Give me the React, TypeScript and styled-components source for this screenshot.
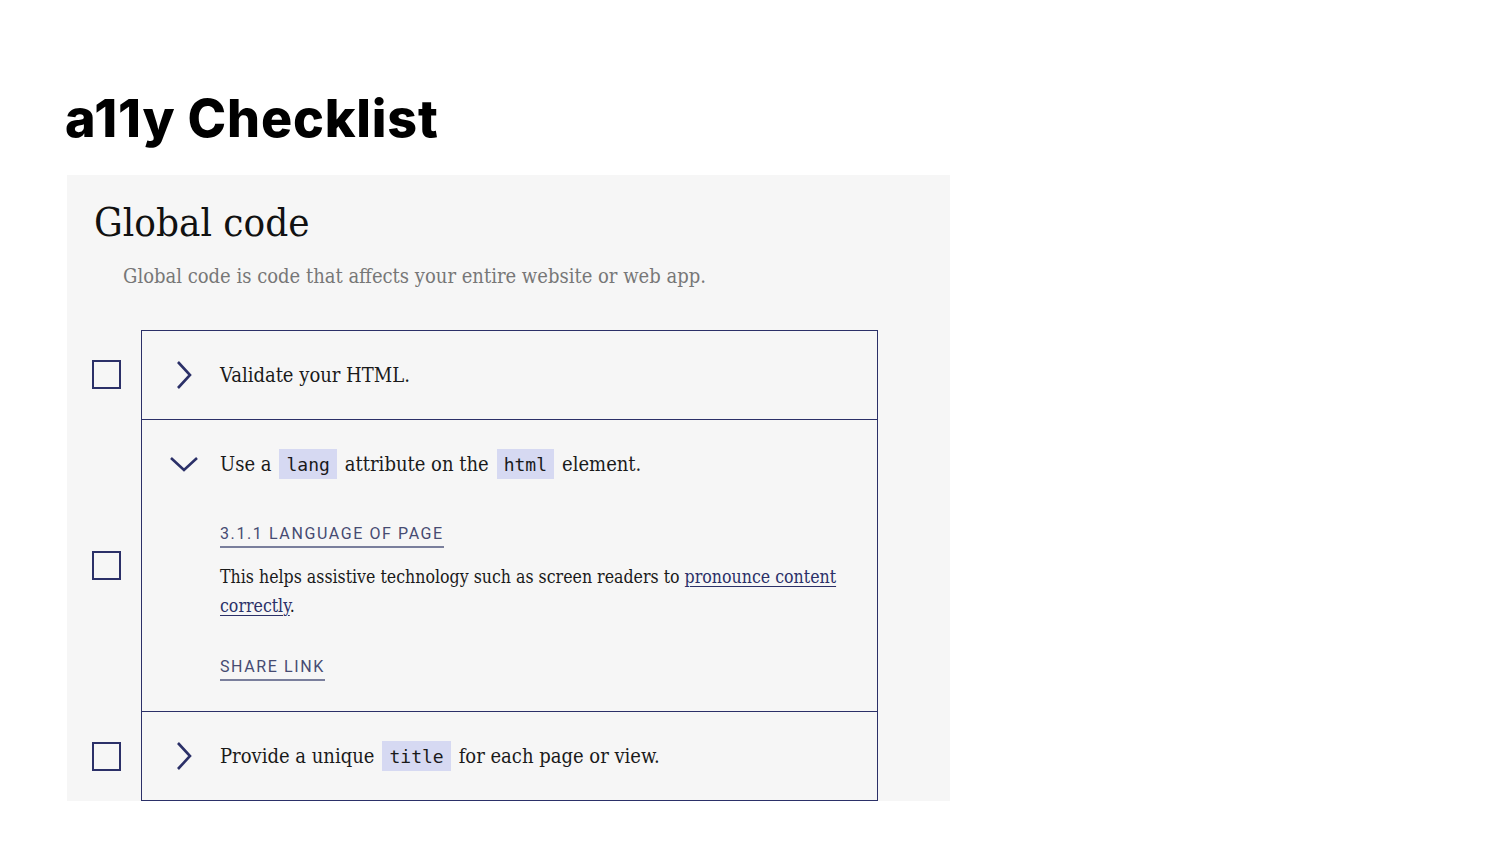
import React from "react";
import styled, { createGlobalStyle } from "styled-components";

const SERIF = `"DejaVu Serif Condensed", "Liberation Serif", serif`;

const Global = createGlobalStyle`
  html, body { margin: 0; padding: 0; background: #ffffff; }
  body { font-family: ${SERIF}; }
`;

const NAVY = "#2b3068";

const Page = styled.div`
  padding: 84px 0 40px 65px;
`;

const Title = styled.h1`
  margin: 0 0 21px 0;
  font-family: "Inter", "Noto Sans", sans-serif;
  font-weight: 800;
  font-size: 52px;
  line-height: 70px;
  letter-spacing: 0.8px;
  color: #000;
`;

const Panel = styled.section`
  margin-left: 2px;
  width: 883px;
  background: #f6f6f6;
  padding: 20px 0 0 0;
  box-sizing: border-box;
`;

const PanelTitle = styled.h2`
  margin: 0 0 0 27px;
  font-family: ${SERIF};
  font-weight: 400;
  font-size: 40px;
  line-height: 54px;
  color: #111;
`;

const Lead = styled.p`
  margin: 13px 0 0 56px;
  font-family: ${SERIF};
  font-size: 20px;
  line-height: 28px;
  color: #777;
`;

const List = styled.ul`
  list-style: none;
  margin: 40px 0 0 0;
  padding: 0;
`;

const Item = styled.li`
  display: grid;
  grid-template-columns: 74px 737px;
  align-items: center;
`;

const CheckCell = styled.div`
  display: flex;
  justify-content: flex-start;
  padding-left: 25px;
`;

const Check = styled.span`
  display: block;
  width: 25px;
  height: 25px;
  border: 2px solid ${NAVY};
`;

const Box = styled.div<{ $last?: boolean }>`
  align-self: stretch;
  border-left: 1px solid ${NAVY};
  border-right: 1px solid ${NAVY};
  border-top: 1px solid ${NAVY};
  border-bottom: ${(p) => (p.$last ? `1px solid ${NAVY}` : "0")};
`;

const Summary = styled.div`
  display: flex;
  align-items: center;
  height: 88px;
  padding-left: 27px;
  font-family: ${SERIF};
  font-size: 20px;
  color: #1a1a1a;
`;

const ChevronWrap = styled.span`
  display: flex;
  align-items: center;
  justify-content: center;
  width: 30px;
  height: 30px;
  margin-right: 21px;
  color: ${NAVY};
`;

const Code = styled.code`
  font-family: "DejaVu Sans Mono", monospace;
  font-size: 18px;
  background: #d6d9f2;
  color: #1a1a1a;
  padding: 5px 7px 4px;
  margin: 0 8px;
`;

const Details = styled.div`
  padding: 16px 38px 30px 78px;
`;

const Tag = styled.a`
  display: inline-block;
  font-family: "Roboto", "DejaVu Sans Condensed", sans-serif;
  font-size: 16px;
  letter-spacing: 1.6px;
  text-transform: uppercase;
  color: #464b72;
  text-decoration: none;
  border-bottom: 2px solid #7a7f9c;
  padding-bottom: 2px;
  line-height: 20px;
`;

const Body = styled.p`
  margin: 15px 0 0 0;
  font-family: ${SERIF};
  font-size: 17.6px;
  line-height: 29px;
  color: #1a1a1a;
`;

const Link = styled.a`
  color: ${NAVY};
  text-decoration: underline;
  text-underline-offset: 3px;
  text-decoration-thickness: 1px;
`;

const ShareRow = styled.div`
  margin-top: 36px;
`;

const Chevron = ({ open }: { open?: boolean }) =>
  open ? (
    <svg width="30" height="18" viewBox="0 0 30 18" fill="none">
      <path d="M2 3 L15 15 L28 3" stroke="currentColor" strokeWidth="2.6" />
    </svg>
  ) : (
    <svg width="18" height="30" viewBox="0 0 18 30" fill="none">
      <path d="M3 2 L15 15 L3 28" stroke="currentColor" strokeWidth="2.6" />
    </svg>
  );

export default function App() {
  return (
    <>
      <Global />
      <Page>
        <Title>a11y Checklist</Title>
        <Panel>
          <PanelTitle>Global code</PanelTitle>
          <Lead>Global code is code that affects your entire website or web app.</Lead>
          <List>
            <Item>
              <CheckCell><Check /></CheckCell>
              <Box>
                <Summary>
                  <ChevronWrap><Chevron /></ChevronWrap>
                  Validate your HTML.
                </Summary>
              </Box>
            </Item>
            <Item>
              <CheckCell><Check /></CheckCell>
              <Box>
                <Summary>
                  <ChevronWrap><Chevron open /></ChevronWrap>
                  Use a<Code>lang</Code>attribute on the<Code>html</Code>element.
                </Summary>
                <Details>
                  <Tag href="#">3.1.1 Language of Page</Tag>
                  <Body>
                    This helps assistive technology such as screen readers to{" "}
                    <Link href="#">pronounce content correctly</Link>.
                  </Body>
                  <ShareRow>
                    <Tag href="#">Share link</Tag>
                  </ShareRow>
                </Details>
              </Box>
            </Item>
            <Item>
              <CheckCell><Check /></CheckCell>
              <Box $last>
                <Summary>
                  <ChevronWrap><Chevron /></ChevronWrap>
                  Provide a unique<Code>title</Code>for each page or view.
                </Summary>
              </Box>
            </Item>
          </List>
        </Panel>
      </Page>
    </>
  );
}
